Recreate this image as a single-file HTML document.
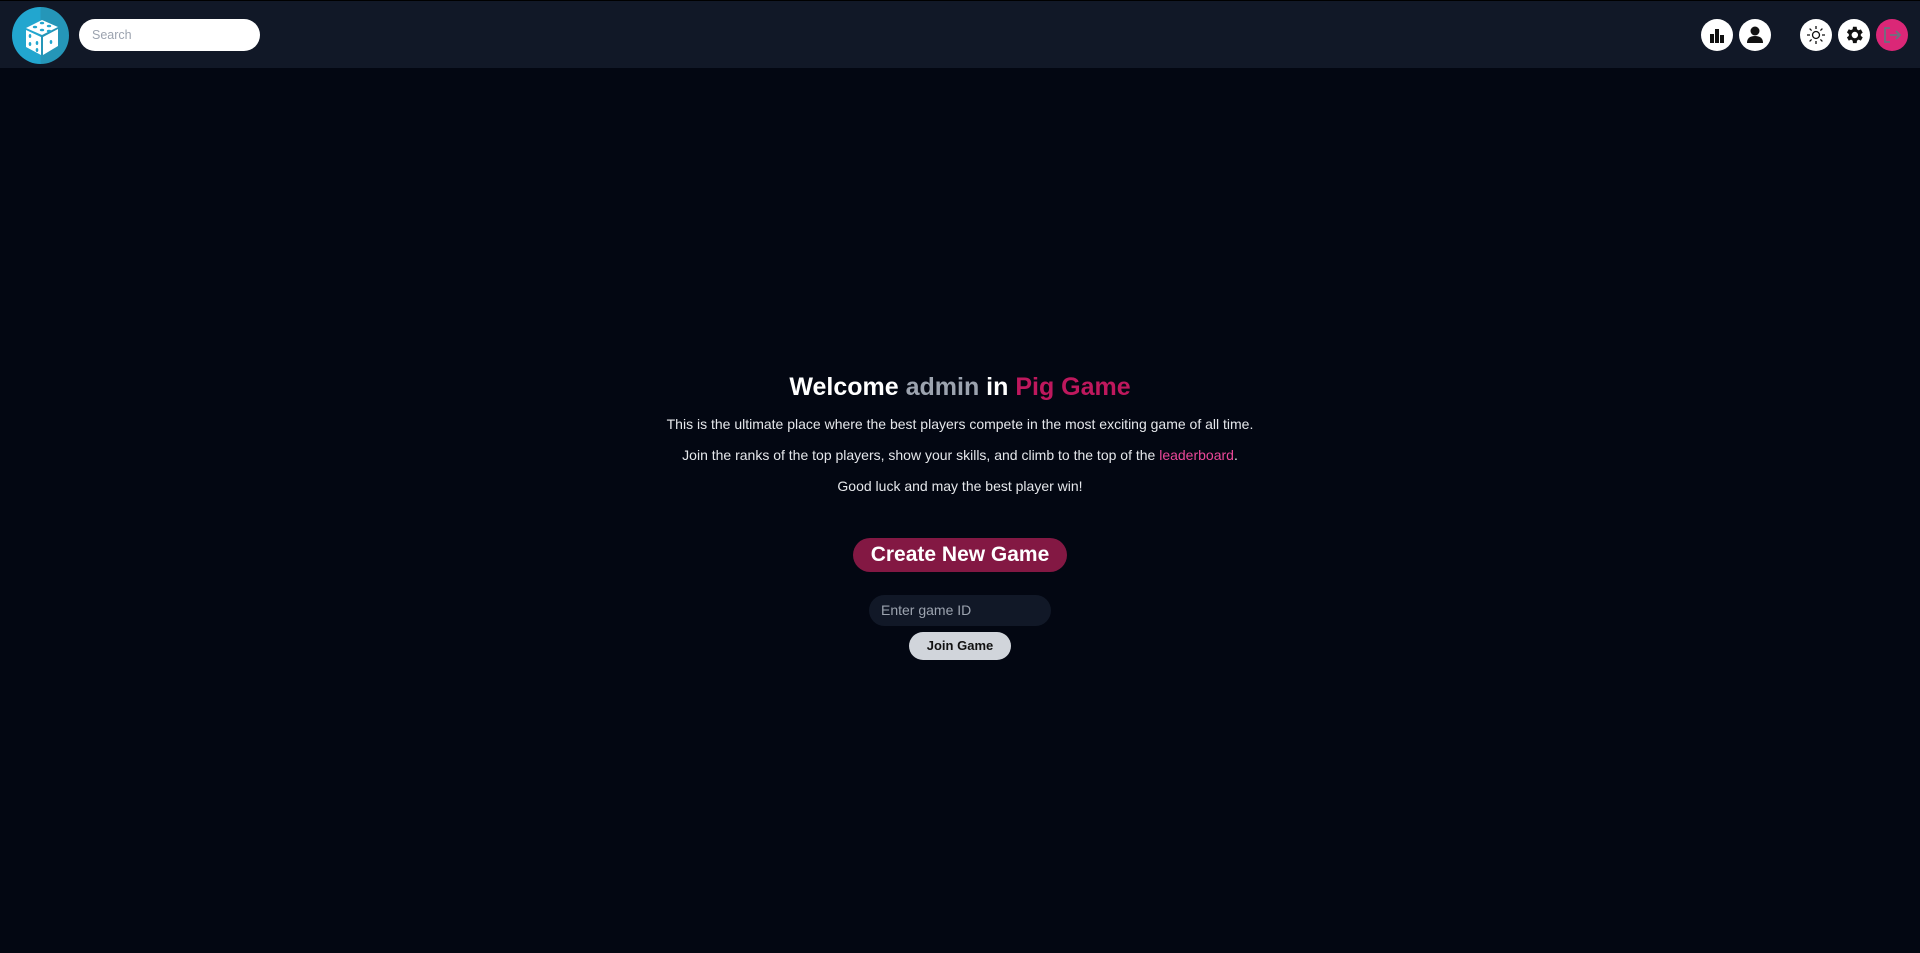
<!DOCTYPE html>
<html><head><style>
*{margin:0;padding:0;box-sizing:border-box}
body{width:1920px;height:953px;background:#030712;font-family:"Liberation Sans",Arial,sans-serif;overflow:hidden;position:relative}
.hdr{position:absolute;left:0;top:1px;width:1920px;height:67px;background:#111827}
.top{position:absolute;left:0;top:0;width:1920px;height:1px;background:#000}
.logo{position:absolute;left:12px;top:7px;width:57px;height:57px;border-radius:50%;background:linear-gradient(90deg,#22a6cf 50%,#2596b8 50%)}
.search{position:absolute;left:79px;top:19px;width:181px;height:32px;border-radius:16px;background:#fff;color:#9ca3af;font-size:12.5px;line-height:32px;padding-left:13px}
.ic{position:absolute;top:19px;width:32px;height:32px;border-radius:50%;background:#fff;display:flex;align-items:center;justify-content:center}
.main{position:absolute;left:0;width:1920px;text-align:center}
h1{font-size:25px;font-weight:bold;color:#fff}
p{font-size:14px;color:#e5e7eb;position:absolute;width:1920px;text-align:center}
.btn{position:absolute;left:853px;top:538px;width:214px;height:34px;border-radius:17px;background:#831843;color:#fff;font-weight:bold;font-size:21px;line-height:34px;text-align:center}
.inp{position:absolute;left:869px;top:595px;width:182px;height:31px;border-radius:16px;background:#111827;color:#9ca3af;font-size:14px;line-height:31px;padding-left:12px}
.join{position:absolute;left:909px;top:632px;width:102px;height:28px;border-radius:14px;background:#d1d5db;color:#111;font-weight:bold;font-size:13px;line-height:28px;text-align:center}
</style></head><body>
<div class="top"></div>
<div class="hdr"></div>
<div class="logo"><svg width="57" height="57" viewBox="0 0 57 57"><path d="M14 21 L30 13 L46 20 L30 28Z" fill="#fff"/><path d="M14 23 L29 30 L29 48 L14 40Z" fill="#fff"/><path d="M31 30 L46 22 L46 39 L31 48Z" fill="#fff"/><g fill="#22a6cf"><ellipse cx="23" cy="20" rx="2.2" ry="1.3"/><ellipse cx="30" cy="23" rx="2.2" ry="1.3"/><ellipse cx="37" cy="19" rx="2.2" ry="1.3"/><ellipse cx="30" cy="16" rx="2.2" ry="1.3"/><ellipse cx="37" cy="24" rx="2.2" ry="1.3"/><ellipse cx="18" cy="29" rx="1.3" ry="2"/><ellipse cx="25" cy="36" rx="1.3" ry="2"/><ellipse cx="18" cy="37" rx="1.3" ry="2"/><ellipse cx="25" cy="43" rx="1.3" ry="2"/><ellipse cx="39" cy="35" rx="1.3" ry="2"/></g></svg></div>
<div class="search">Search</div>
<div class="ic" style="left:1701px"><svg width="18" height="18"><rect x="2" y="8" width="4" height="9" fill="#111"/><rect x="7" y="3" width="4" height="14" fill="#111"/><rect x="12" y="9" width="4" height="8" fill="#111"/></svg></div>
<div class="ic" style="left:1739px"><svg width="20" height="20"><circle cx="10" cy="6" r="4.5" fill="#111"/><path d="M2 18 Q2 11 10 11 Q18 11 18 18Z" fill="#111"/></svg></div>
<div class="ic" style="left:1800px"><svg width="20" height="20" stroke="#111" stroke-width="1.3" fill="none"><circle cx="10" cy="10" r="3.5"/><path d="M10 1v3M10 16v3M1 10h3M16 10h3M3.6 3.6l2 2M14.4 14.4l2 2M3.6 16.4l2-2M14.4 5.6l2-2"/></svg></div>
<div class="ic" style="left:1838px"><svg width="22" height="22" viewBox="0 0 24 24"><path fill="#111" d="M19.4 13a7.5 7.5 0 000-2l2.1-1.6-2-3.5-2.5 1a7.6 7.6 0 00-1.7-1L14.9 3h-4l-.4 2.7a7.6 7.6 0 00-1.7 1l-2.5-1-2 3.5L6.4 11a7.5 7.5 0 000 2l-2.1 1.6 2 3.5 2.5-1a7.6 7.6 0 001.7 1l.4 2.7h4l.4-2.7a7.6 7.6 0 001.7-1l2.5 1 2-3.5zM12.9 15.5a3.5 3.5 0 110-7 3.5 3.5 0 010 7z"/></svg></div>
<div class="ic" style="left:1876px;background:#db2777"><svg width="20" height="20" stroke="#6b7280" stroke-width="1.8" fill="none"><path d="M8 3H3v14h5M8 10h10M14 6l4 4-4 4"/></svg></div>
<div class="main" style="top:373px"><h1>Welcome <span style="color:#9ca3af">admin</span> in <span style="color:#be185d">Pig Game</span></h1></div>
<p style="top:416px">This is the ultimate place where the best players compete in the most exciting game of all time.</p>
<p style="top:447px">Join the ranks of the top players, show your skills, and climb to the top of the <span style="color:#ec4899">leaderboard</span>.</p>
<p style="top:478px">Good luck and may the best player win!</p>
<div class="btn">Create New Game</div>
<div class="inp">Enter game ID</div>
<div class="join">Join Game</div>
</body></html>
